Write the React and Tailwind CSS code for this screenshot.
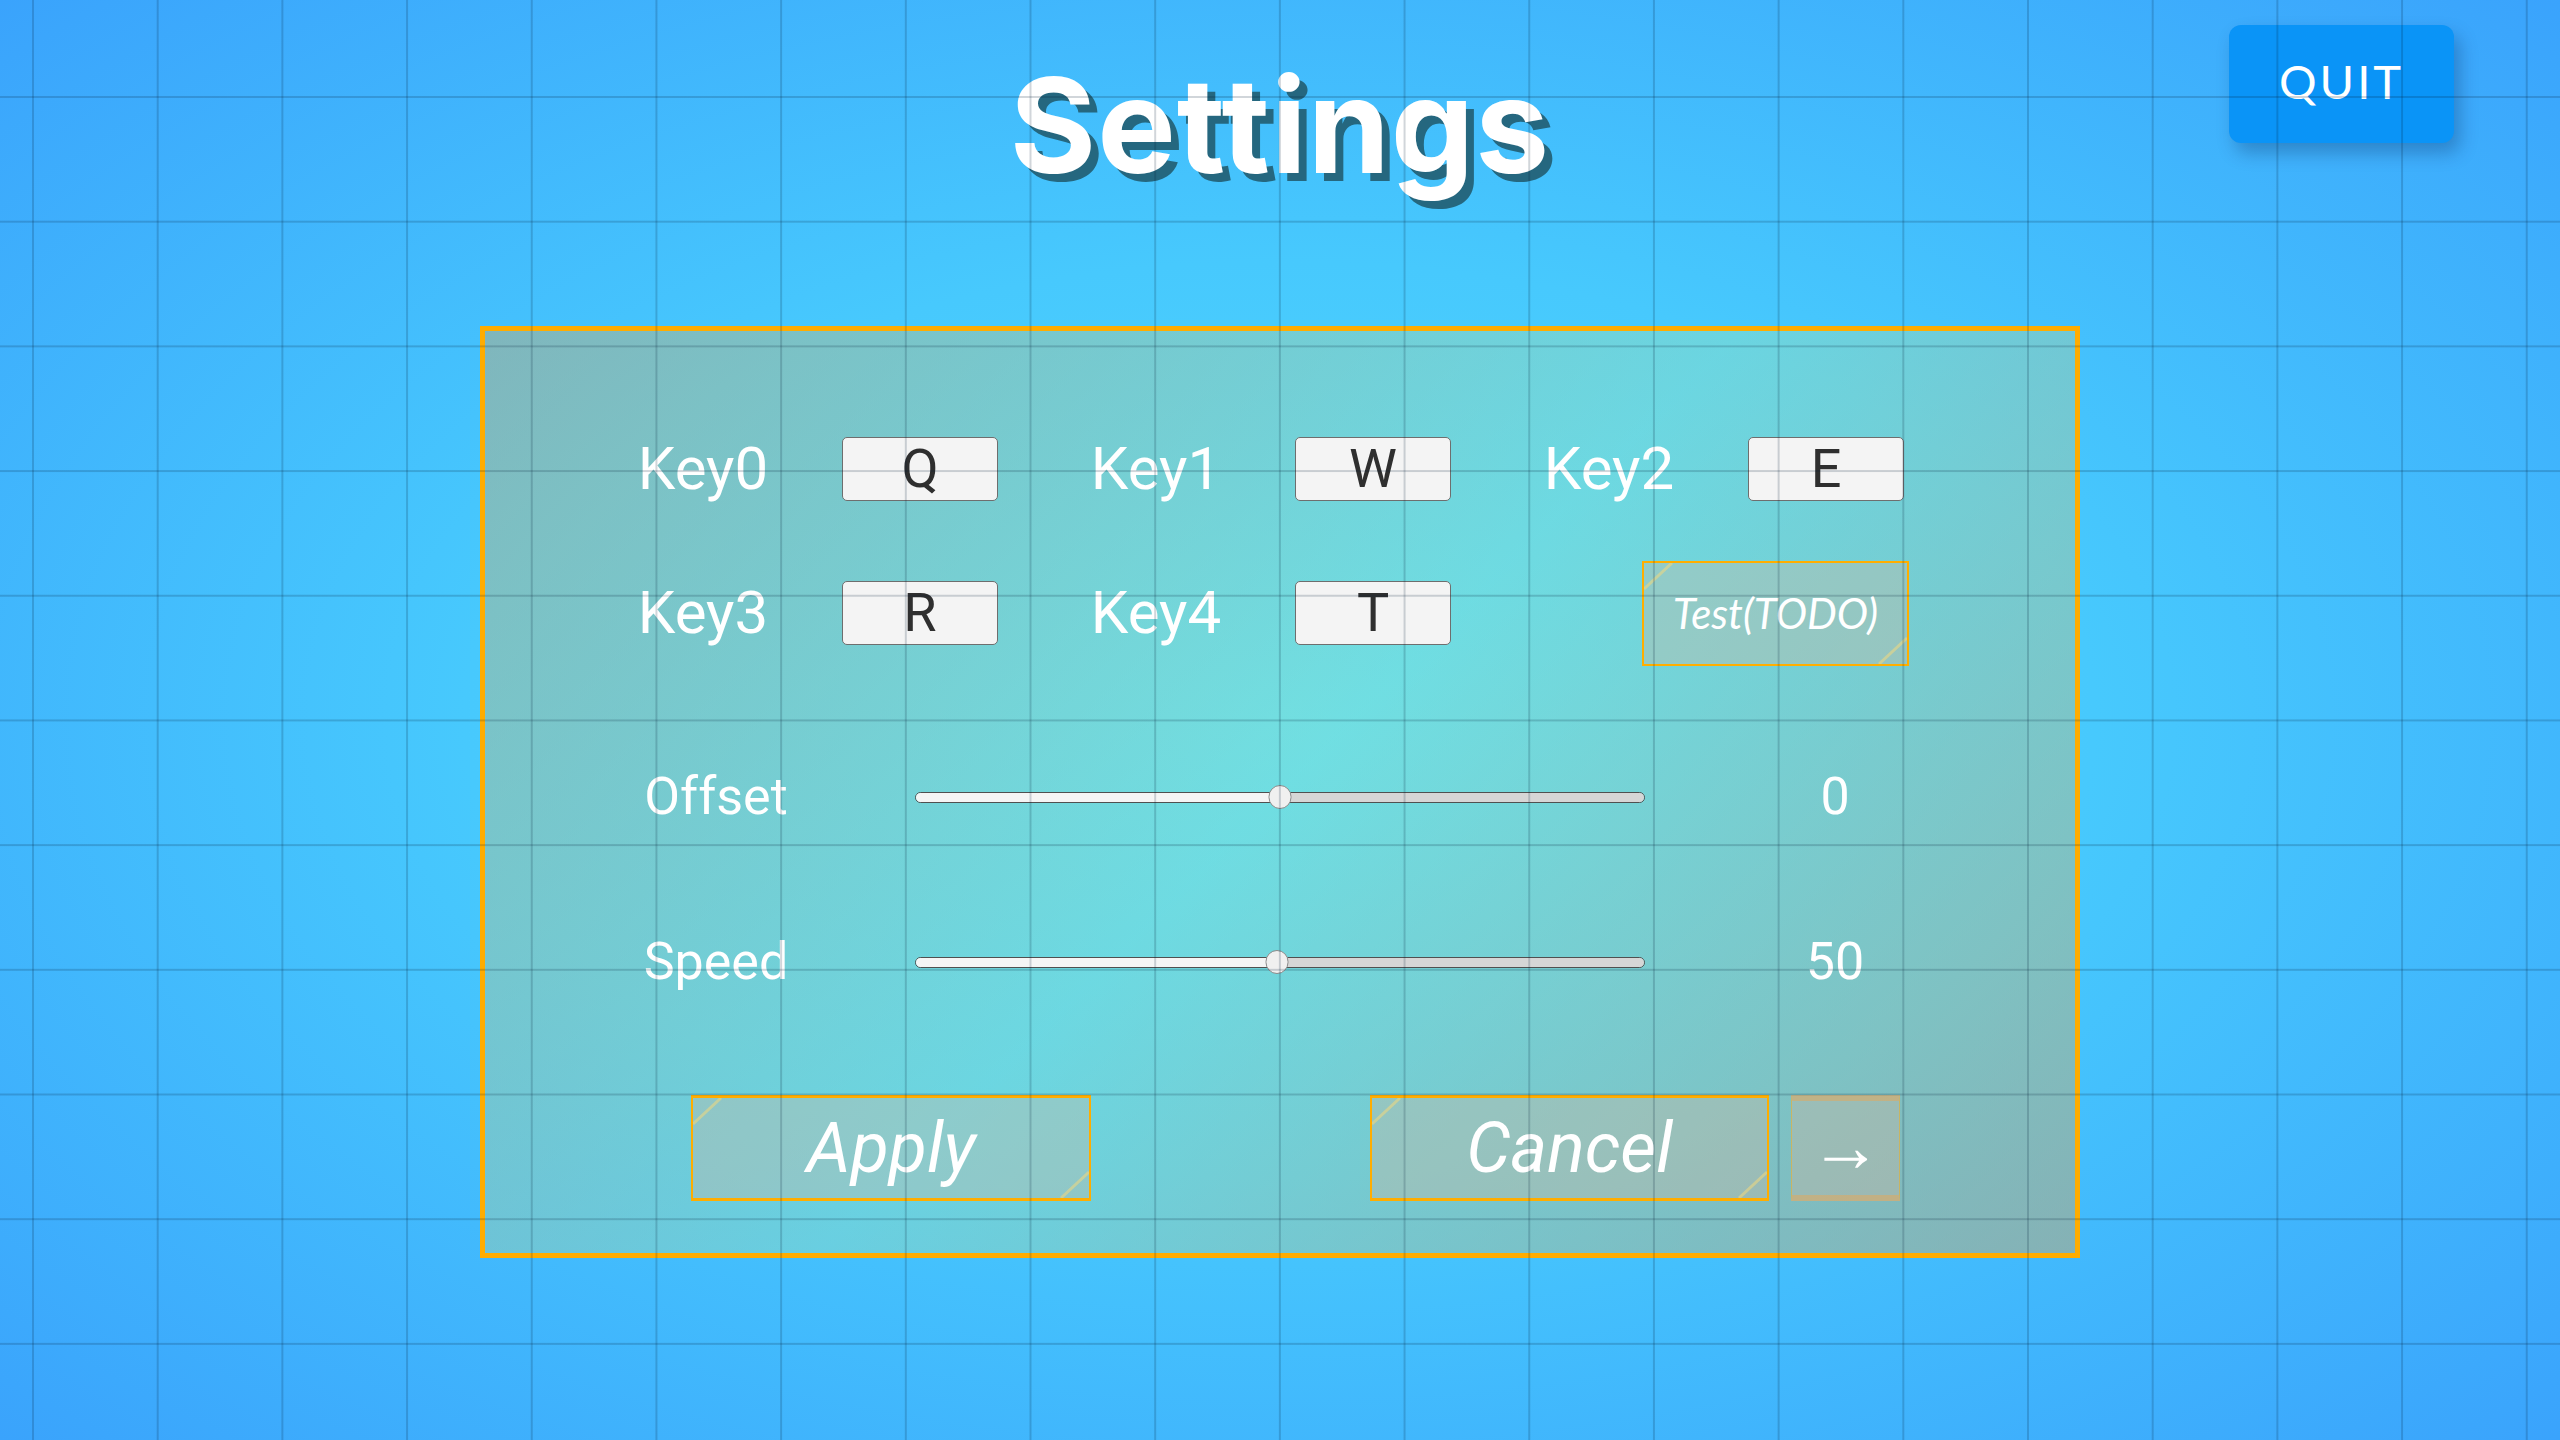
import React from "react";

const roboto = "font-['Roboto',sans-serif]";

function KeyCell({ label, k }) {
  return (
    <div className="flex items-center gap-[24px]">
      <span className={`w-[230px] text-center text-white text-[60px] leading-none ${roboto}`}>{label}</span>
      <div className={`w-[156px] h-[64px] rounded-[5px] bg-[#f4f4f4] border border-[#6e6e6e] flex items-center justify-center text-[54px] leading-none text-[#2f2f2f] ${roboto}`}>
        {k}
      </div>
    </div>
  );
}

function Corners() {
  return (
    <>
      <svg className="absolute left-0 top-0 w-[30px] h-[28px] pointer-events-none" viewBox="0 0 30 28">
        <line x1="0" y1="26" x2="28" y2="0" stroke="rgba(235,215,130,0.6)" strokeWidth="3" />
      </svg>
      <svg className="absolute right-0 bottom-0 w-[30px] h-[28px] pointer-events-none" viewBox="0 0 30 28">
        <line x1="2" y1="28" x2="30" y2="2" stroke="rgba(235,215,130,0.6)" strokeWidth="3" />
      </svg>
    </>
  );
}

function Slider({ label, value, pct }) {
  return (
    <div className="h-[60px] flex items-center pl-[111px]">
      <span className={`w-[240px] text-center text-white text-[52px] leading-none ${roboto}`}>{label}</span>
      <div className="relative ml-[79px] w-[730px] h-[11px]">
        <div className="flex w-full h-full rounded-full overflow-hidden border border-[#505050]">
          <div className="h-full bg-[#f5f5f5]" style={{ width: `${pct}%` }} />
          <div className="h-full flex-1 bg-[#d6d6d6]" />
        </div>
        <div
          className="absolute top-1/2 w-[23px] h-[24px] -translate-x-1/2 -translate-y-1/2 rounded-full bg-[#f0f0f0] border border-[#8a8a8a]"
          style={{ left: `${pct}%` }}
        />
      </div>
      <span className={`ml-[130px] w-[120px] text-center text-white text-[52px] leading-none ${roboto}`}>{value}</span>
    </div>
  );
}

export default function App() {
  return (
    <div className="relative w-[2560px] h-[1440px] overflow-hidden bg-[radial-gradient(ellipse_at_center,#4fd8ff_0%,#47c9fd_45%,#3aa3fc_100%)]">
      {/* header */}
      <div className="grid grid-cols-[1fr_auto_1fr] items-start">
        <div />
        <h1 className="mt-[59px] text-[132px] leading-none font-bold tracking-[1px] text-white font-['Inter',sans-serif] [text-shadow:8px_8px_0_#25677f]">
          Settings
        </h1>
        <div className="flex justify-end">
          <button className="mt-[25px] mr-[106px] w-[225px] h-[118px] rounded-[12px] bg-[#0a94f7] shadow-[6px_10px_18px_rgba(0,30,80,0.28)] flex items-center justify-center text-white text-[47px] leading-none tracking-[3px] font-['Lato',sans-serif] pb-[6px]">
            QUIT
          </button>
        </div>
      </div>

      {/* panel */}
      <div className="mt-[135px] mx-auto w-[1600px] h-[932px] border-[5px] border-[#ffac00] bg-[linear-gradient(135deg,rgba(200,170,110,0.45)_0%,rgba(190,240,160,0.3)_50%,rgba(200,170,110,0.5)_100%)] flex flex-col">
        <div className="mt-[106px] flex pl-[103px] gap-[43px]">
          <KeyCell label="Key0" k="Q" />
          <KeyCell label="Key1" k="W" />
          <KeyCell label="Key2" k="E" />
        </div>
        <div className="mt-[59px] h-[106px] flex items-center pl-[103px] gap-[43px]">
          <KeyCell label="Key3" k="R" />
          <KeyCell label="Key4" k="T" />
          <button className="relative ml-[148px] w-[267px] h-[105px] border-2 border-[#ffae00] bg-[rgba(222,182,154,0.3)] flex items-center justify-center text-white italic text-[42px] leading-none font-['Lato',sans-serif]">
            <Corners />
            Test(TODO)
          </button>
        </div>

        <div className="mt-[101px]">
          <Slider label="Offset" value="0" pct={50} />
        </div>
        <div className="mt-[105px]">
          <Slider label="Speed" value="50" pct={49.6} />
        </div>

        <div className="mt-[103px] flex pl-[206px]">
          <button className={`relative w-[400px] h-[106px] border-x-2 border-y-[3px] border-[#ffad00] bg-[rgba(222,182,154,0.3)] flex items-center justify-center text-white italic text-[70px] leading-none ${roboto}`}>
            <Corners />
            Apply
          </button>
          <button className={`relative ml-[279px] w-[399px] h-[106px] border-x-2 border-y-[3px] border-[#ffad00] bg-[rgba(222,182,154,0.3)] flex items-center justify-center text-white italic text-[70px] leading-none ${roboto}`}>
            <Corners />
            Cancel
          </button>
          <button className="relative ml-[22px] w-[109px] h-[106px] border-x border-x-[rgba(255,173,0,0.45)] border-y-[6px] border-y-[rgba(225,170,95,0.55)] bg-[rgba(222,182,154,0.3)] flex items-center justify-center text-white text-[72px] leading-none pb-[4px] font-['Liberation_Sans',sans-serif]">
            →
          </button>
        </div>
      </div>

      {/* grid overlay */}
      <div className="absolute inset-0 pointer-events-none bg-[linear-gradient(to_right,rgba(0,25,50,0.18)_1.5px,transparent_1.5px),linear-gradient(to_bottom,rgba(0,25,50,0.18)_1.5px,transparent_1.5px)] bg-size-[124.7px_124.7px] bg-position-[32px_96px]" />
    </div>
  );
}
